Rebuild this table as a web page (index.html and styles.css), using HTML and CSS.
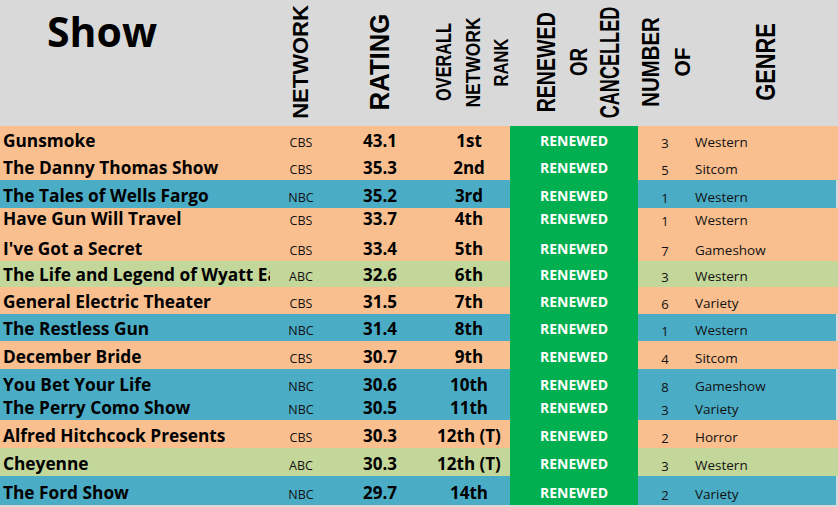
FILE: index.html
```html
<!DOCTYPE html>
<html>
<head>
<meta charset="utf-8">
<title>Show Ratings</title>
<link rel="stylesheet" href="styles.css">
</head>
<body>
<div class="sheet">
  <div class="head">
    <div class="h-show">Show</div>
    <div class="grp"><div class="ln"><span class="v v-net">NETWORK</span></div></div>
    <div class="grp"><div class="ln"><span class="v v-rating">RATING</span></div></div>
    <div class="grp grp-rank">
      <div class="ln"><span class="v v-overall">OVERALL</span></div>
      <div class="ln"><span class="v v-net2">NETWORK</span></div>
      <div class="ln"><span class="v v-rank">RANK</span></div>
    </div>
    <div class="grp grp-renew">
      <div class="ln"><span class="v v-renewed">RENEWED</span></div>
      <div class="ln"><span class="v v-or">OR</span></div>
      <div class="ln"><span class="v v-cancelled">CANCELLED</span></div>
    </div>
    <div class="grp grp-num">
      <div class="ln"><span class="v v-number">NUMBER</span></div>
      <div class="ln"><span class="v v-of">OF</span></div>
    </div>
    <div class="grp"><div class="ln"><span class="v v-genre">GENRE</span></div></div>
    <div></div>
  </div>

  <div class="row orange h27"><div class="c name">Gunsmoke</div><div class="c net">CBS</div><div class="c rate">43.1</div><div class="c rank">1st</div><div class="c stat">RENEWED</div><div class="c num">3</div><div class="c genre">Western</div></div>
  <div class="row orange h27"><div class="c name">The Danny Thomas Show</div><div class="c net">CBS</div><div class="c rate">35.3</div><div class="c rank">2nd</div><div class="c stat">RENEWED</div><div class="c num">5</div><div class="c genre">Sitcom</div></div>
  <div class="row blue h28"><div class="c name">The Tales of Wells Fargo</div><div class="c net">NBC</div><div class="c rate">35.2</div><div class="c rank">3rd</div><div class="c stat">RENEWED</div><div class="c num">1</div><div class="c genre">Western</div></div>
  <div class="row orange h23"><div class="c name">Have Gun Will Travel</div><div class="c net">CBS</div><div class="c rate">33.7</div><div class="c rank">4th</div><div class="c stat">RENEWED</div><div class="c num">1</div><div class="c genre">Western</div></div>
  <div class="row orange h30"><div class="c name">I've Got a Secret</div><div class="c net">CBS</div><div class="c rate">33.4</div><div class="c rank">5th</div><div class="c stat">RENEWED</div><div class="c num">7</div><div class="c genre">Gameshow</div></div>
  <div class="row green h26"><div class="c name">The Life and Legend of Wyatt Earp</div><div class="c net">ABC</div><div class="c rate">32.6</div><div class="c rank">6th</div><div class="c stat">RENEWED</div><div class="c num">3</div><div class="c genre">Western</div></div>
  <div class="row orange h27"><div class="c name">General Electric Theater</div><div class="c net">CBS</div><div class="c rate">31.5</div><div class="c rank">7th</div><div class="c stat">RENEWED</div><div class="c num">6</div><div class="c genre">Variety</div></div>
  <div class="row blue h27"><div class="c name">The Restless Gun</div><div class="c net">NBC</div><div class="c rate">31.4</div><div class="c rank">8th</div><div class="c stat">RENEWED</div><div class="c num">1</div><div class="c genre">Western</div></div>
  <div class="row orange h28"><div class="c name">December Bride</div><div class="c net">CBS</div><div class="c rate">30.7</div><div class="c rank">9th</div><div class="c stat">RENEWED</div><div class="c num">4</div><div class="c genre">Sitcom</div></div>
  <div class="row blue h28"><div class="c name">You Bet Your Life</div><div class="c net">NBC</div><div class="c rate">30.6</div><div class="c rank">10th</div><div class="c stat">RENEWED</div><div class="c num">8</div><div class="c genre">Gameshow</div></div>
  <div class="row blue h23"><div class="c name">The Perry Como Show</div><div class="c net">NBC</div><div class="c rate">30.5</div><div class="c rank">11th</div><div class="c stat">RENEWED</div><div class="c num">3</div><div class="c genre">Variety</div></div>
  <div class="row orange h28"><div class="c name">Alfred Hitchcock Presents</div><div class="c net">CBS</div><div class="c rate">30.3</div><div class="c rank">12th (T)</div><div class="c stat">RENEWED</div><div class="c num">2</div><div class="c genre">Horror</div></div>
  <div class="row green h28"><div class="c name">Cheyenne</div><div class="c net">ABC</div><div class="c rate">30.3</div><div class="c rank">12th (T)</div><div class="c stat">RENEWED</div><div class="c num">3</div><div class="c genre">Western</div></div>
  <div class="row blue h29"><div class="c name">The Ford Show</div><div class="c net">NBC</div><div class="c rate">29.7</div><div class="c rank">14th</div><div class="c stat">RENEWED</div><div class="c num">2</div><div class="c genre">Variety</div></div>
</div>
</body>
</html>
```

FILE: styles.css
```css
html, body {
  margin: 0;
  padding: 0;
}
body {
  width: 838px;
  height: 507px;
  overflow: hidden;
  background: #d9d9d9;
  font-family: "Open Sans", "Liberation Sans", sans-serif;
  color: #000;
}
.sheet {
  width: 838px;
}

/* ---------- header ---------- */
.head {
  display: grid;
  grid-template-columns: 262px 78px 80px 104px 109px 68px 130px 1fr;
  height: 126px;
  background: #d9d9d9;
}
.h-show {
  font-family: "Open Sans", sans-serif;
  font-weight: 700;
  font-size: 41px;
  line-height: 1;
  padding: 11px 0 0 47px;
}
.grp {
  display: flex;
  justify-content: center;
}
.ln {
  width: 40px;
  display: flex;
  align-items: center;
  justify-content: center;
  padding-bottom: 2px;
}
.grp-rank .ln { width: 28px; }
.grp-renew .ln { width: 31.5px; }
.grp-num .ln { width: 32px; }

.v {
  flex: none;
  white-space: nowrap;
  font-family: "Liberation Sans", Arial, sans-serif;
  font-weight: 700;
  line-height: 1;
  color: #000;
}
.v-net { font-size: 22px; transform: rotate(-90deg); }
.v-rating { font-size: 28px; transform: rotate(-90deg) scaleX(0.92); }
.v-overall { font-size: 22px; transform: rotate(-90deg) scaleX(0.74); }
.v-net2 { font-size: 21px; transform: rotate(-90deg) scaleX(0.83); }
.v-rank { font-size: 21px; transform: rotate(-90deg) scaleX(0.79); }
.v-renewed { font-size: 26.5px; transform: rotate(-90deg) scaleX(0.74); }
.v-or { font-size: 24px; transform: rotate(-90deg) scaleX(0.78); }
.v-cancelled { font-size: 27px; transform: rotate(-90deg) scaleX(0.67); }
.v-number { font-size: 24px; transform: rotate(-90deg) scaleX(0.85); }
.v-of { font-size: 22px; transform: rotate(-90deg) scaleX(0.95); }
.v-genre { font-size: 28px; transform: rotate(-90deg) scaleX(0.78); }

/* ---------- rows ---------- */
.row {
  display: grid;
  grid-template-columns: 270px 62px 96px 82px 128px 54px 1fr;
}
.orange { background: #f9bf8f; }
.blue { background: #4bacc6; margin-right: 2px; }
.green { background: #c4d79b; }

.h23 { height: 23px; }
.h26 { height: 26px; }
.h27 { height: 27px; }
.h28 { height: 28px; }
.h29 { height: 29px; }
.h30 { height: 30px; }

.c {
  display: flex;
  align-items: flex-end;
  overflow: hidden;
  white-space: nowrap;
  line-height: 1;
  color: #000;
}
.name {
  font-weight: 700;
  font-size: 17.3px;
  padding: 0 0 4px 3px;
}
.net {
  justify-content: center;
  font-size: 12.5px;
  padding-bottom: 3.5px;
  color: #111;
}
.rate, .rank {
  justify-content: center;
  font-weight: 700;
  font-size: 17px;
  padding-bottom: 4px;
}
.stat {
  justify-content: center;
  background: #00b050;
  color: #fff;
  font-weight: 700;
  font-size: 14px;
  padding-bottom: 5.5px;
}
.num {
  justify-content: center;
  font-size: 13px;
  padding-bottom: 3.5px;
  color: #111;
}
.genre {
  padding: 0 0 3.5px 3px;
  font-size: 13.5px;
  color: #111;
}
```
